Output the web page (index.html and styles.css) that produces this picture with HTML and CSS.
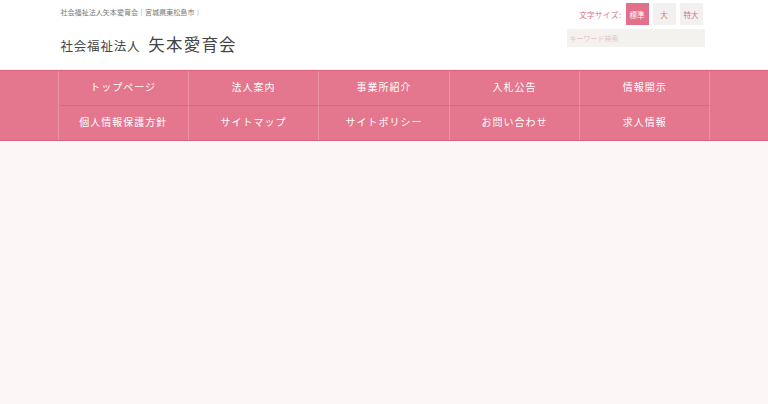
FILE: index.html
```html
<!DOCTYPE html>
<html lang="ja">
<head>
<meta charset="utf-8">
<title>社会福祉法人 矢本愛育会</title>
<link rel="stylesheet" href="styles.css">
</head>
<body>
<header class="header">
  <div class="container header-inner">
    <div class="brand">
      <p class="tagline">社会福祉法人矢本愛育会｜宮城県東松島市｜</p>
      <h1 class="site-title"><span class="corp">社会福祉法人</span> <span class="name">矢本愛育会</span></h1>
    </div>
    <div class="tools">
      <div class="fontsize">
        <span class="fs-label">文字サイズ:</span>
        <span class="fs-btn active">標準</span>
        <span class="fs-btn">大</span>
        <span class="fs-btn">特大</span>
      </div>
      <input class="search" type="text" placeholder="キーワード検索">
    </div>
  </div>
</header>
<nav class="gnav">
  <ul class="container nav-grid">
    <li>トップページ</li>
    <li>法人案内</li>
    <li>事業所紹介</li>
    <li>入札公告</li>
    <li>情報開示</li>
    <li>個人情報保護方針</li>
    <li>サイトマップ</li>
    <li>サイトポリシー</li>
    <li>お問い合わせ</li>
    <li>求人情報</li>
  </ul>
</nav>
<main class="main"></main>
</body>
</html>
```
FILE: styles.css
```css
* { box-sizing: border-box; }
html, body { margin: 0; padding: 0; }
body {
  background: #fdf6f6;
  font-family: "Noto Sans CJK JP", "Noto Sans", sans-serif;
  color: #555;
  height: 404px;
  overflow: hidden;
}
.container {
  width: 653px;
  margin: 0 auto;
}
.header {
  background: #fff;
  height: 70px;
  border-bottom: 1px solid #fbe9ec;
}
.header-inner {
  display: flex;
  justify-content: space-between;
}
.brand { padding-left: 3px; }
.tagline {
  margin: 0;
  padding-top: 6px;
  font-size: 7px;
  line-height: 12px;
  color: #777;
  letter-spacing: 0.05px;
}
.site-title {
  margin: 9px 0 0;
  font-weight: 400;
  color: #444;
  line-height: 20px;
  letter-spacing: 0.8px;
}
.site-title .corp { font-size: 12.5px; }
.site-title .name { font-size: 16.5px; letter-spacing: 1.2px; }
.tools {
  display: flex;
  flex-direction: column;
  align-items: flex-end;
  padding-top: 3px;
  margin-right: 6px;
}
.fontsize {
  display: flex;
  align-items: center;
  gap: 4px;
  margin-right: 2px;
}
.fs-label {
  font-size: 7.5px;
  color: #d9708a;
  letter-spacing: 0.5px;
}
.fs-btn {
  width: 23px;
  height: 22px;
  display: flex;
  align-items: center;
  justify-content: center;
  font-size: 7.5px;
  background: #f3f1ef;
  color: #d9708a;
}
.fs-btn.active {
  background: #e3708b;
  color: #fff;
}
.search {
  margin-top: 4px;
  width: 138px;
  height: 18px;
  border: none;
  background: #f4f2ef;
  font-family: inherit;
  font-size: 7px;
  padding: 0 3px;
  outline: none;
}
.search::placeholder { color: #e8c3cc; }
.gnav {
  background: #e4768e;
  border-top: 1px solid #d9647e;
  border-bottom: 1px solid #d9647e;
}
.nav-grid {
  list-style: none;
  padding: 0;
  margin: 0 auto;
  display: grid;
  grid-template-columns: repeat(5, 1fr);
  border-left: 1px solid #ec93a6;
}
.nav-grid li {
  height: 34px;
  padding-bottom: 4px;
  display: flex;
  align-items: center;
  justify-content: center;
  color: #fff;
  font-size: 10px;
  letter-spacing: 1px;
  border-right: 1px solid #ec93a6;
}
.nav-grid li:nth-child(-n+5) {
  height: 35px;
  border-bottom: 1px solid #d8677f;
}
.main { height: 262px; }
```
